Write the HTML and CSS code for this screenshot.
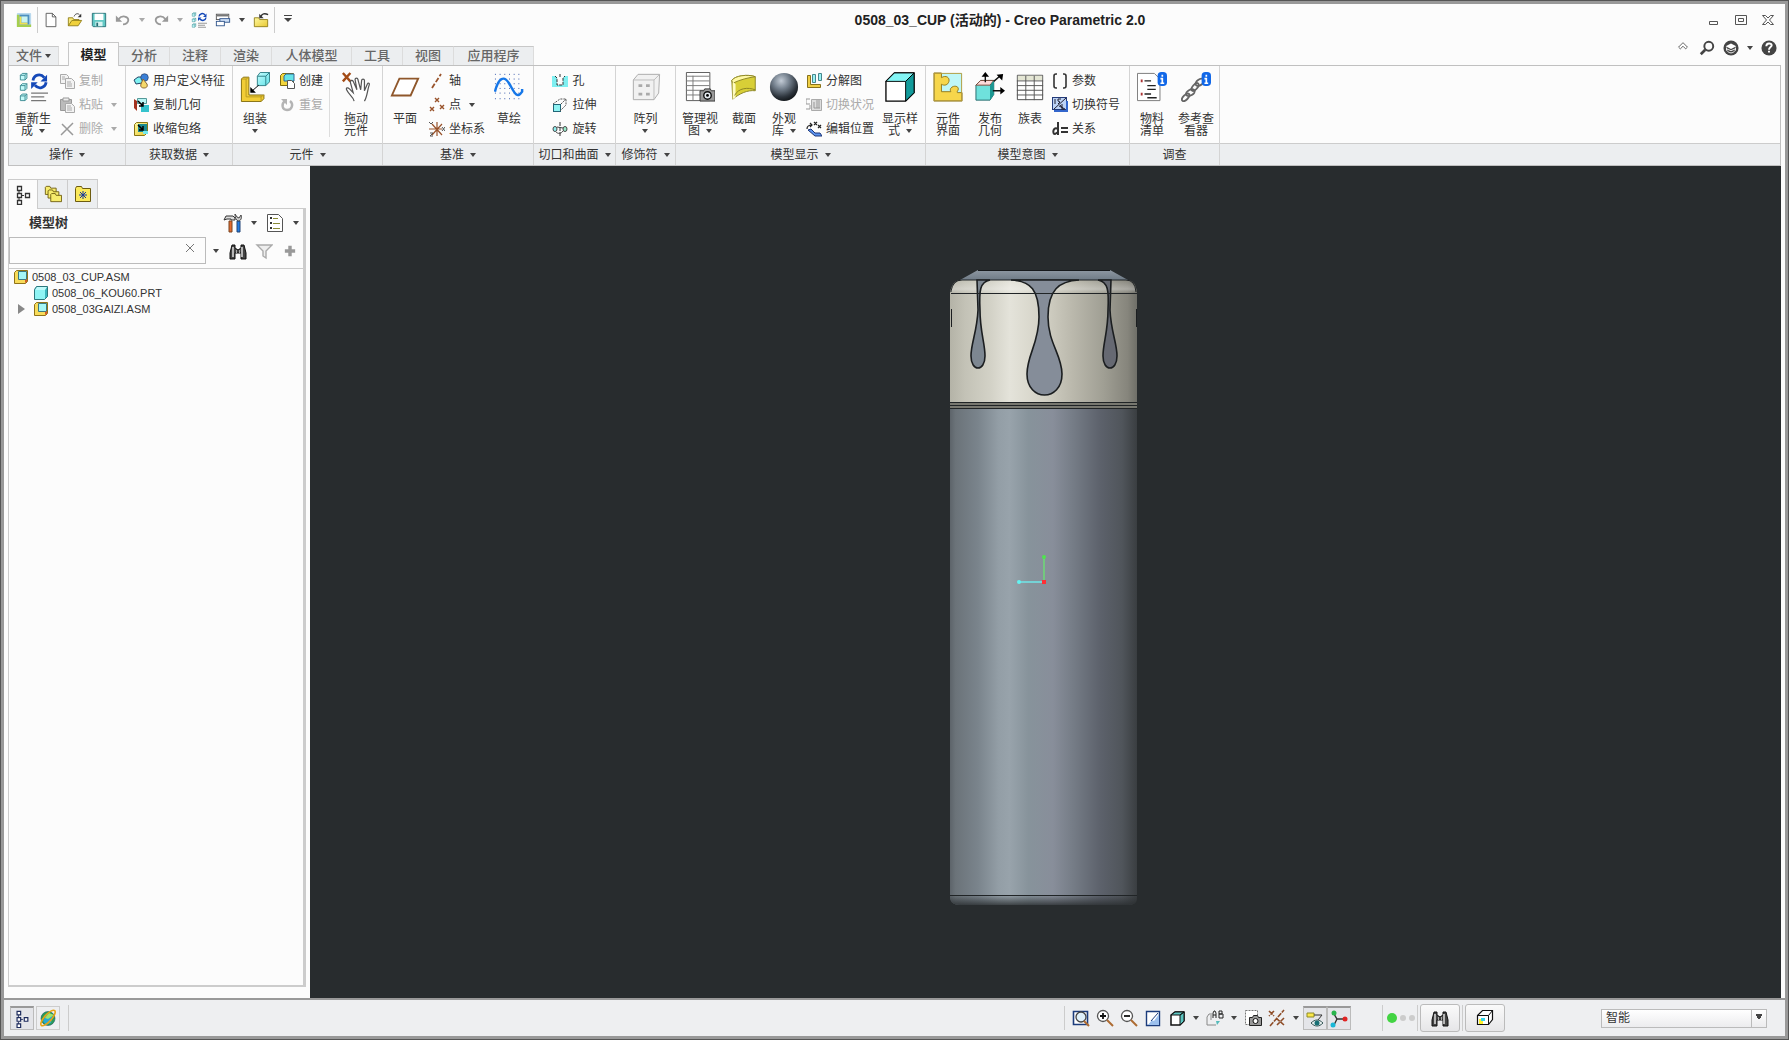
FILE: index.html
```html
<!DOCTYPE html>
<html lang="zh-CN">
<head>
<meta charset="utf-8">
<title>0508_03_CUP (活动的) - Creo Parametric 2.0</title>
<link rel="stylesheet" href="styles.css">
</head>
<body>
<svg class="sprite" aria-hidden="true">
  <defs>
    <linearGradient id="gold" x1="0" y1="0" x2="1" y2="1"><stop offset="0" stop-color="#fff9a0"/><stop offset="1" stop-color="#e8c832"/></linearGradient>
    <linearGradient id="aqua" x1="0" y1="0" x2="1" y2="1"><stop offset="0" stop-color="#c6ffff"/><stop offset="1" stop-color="#5fe0e6"/></linearGradient>
    <radialGradient id="ball" cx=".4" cy=".28" r=".72"><stop offset="0" stop-color="#c3ccd6"/><stop offset=".4" stop-color="#75818e"/><stop offset=".8" stop-color="#2d343c"/><stop offset="1" stop-color="#15191d"/></radialGradient>
  </defs>
  <symbol id="app" viewBox="0 0 18 18"><rect x="1" y="1" width="16" height="16" rx="1" fill="#b9d9ee"/><path d="M1 17V3h3v11h13v3z" fill="#a5cf4e"/><rect x="4" y="3" width="11" height="11" fill="#4c8fc0"/><rect x="6" y="5" width="7" height="7" fill="#c9f3ef"/><path d="M4 14V5h2v7h7v2z" fill="#f0e050"/></symbol>
  <symbol id="new" viewBox="0 0 18 18"><path d="M3.500 1.500h7l4 4v11h-11z" fill="#fff" stroke="#555"/><path d="M10.500 1.500v4h4" fill="none" stroke="#555"/></symbol>
  <symbol id="open" viewBox="0 0 18 18"><path d="M1.500 15.500v-9h5l1 2h6v2" fill="#f8e878" stroke="#8f7d18"/><path d="M1.500 15.500l4-6h11l-4 6z" fill="#f0d13c" stroke="#8f7d18"/><path d="M8 5c1-3 4-4 6-2" fill="none" stroke="#333"/><path d="M16 2v4h-4z" fill="#333"/></symbol>
  <symbol id="save" viewBox="0 0 18 18"><path d="M1.500 1.500h15v15h-14l-1-1z" fill="#63c9c5" stroke="#256d74"/><rect x="4" y="2" width="10" height="7" fill="#fff"/><path d="M5 11h8v5H5z" fill="#d8f4f2"/><path d="M6 12h2v4H6z" fill="#256d74"/></symbol>
  <symbol id="undo" viewBox="0 0 18 18"><path d="M4 8c4-5 11-3 11 1 0 3-3 5-6 5" fill="none" stroke="#999" stroke-width="2"/><path d="M1 4v7h7z" fill="#999"/></symbol>
  <symbol id="redo" viewBox="0 0 18 18"><path d="M14 8C10 3 3 5 3 9c0 3 3 5 6 5" fill="none" stroke="#999" stroke-width="2"/><path d="M17 4v7h-7z" fill="#999"/></symbol>
  <symbol id="regen" viewBox="0 0 32 32"><g fill="#c4fafa" stroke="#3d8c93"><path d="M2.500 3.500l2-2h5v5l-2 2h-5z"/><path d="M2.500 14.500l2-2h5v5l-2 2h-5z"/><path d="M2.500 25.500l2-2h5v5l-2 2h-5z"/><path d="M2.500 3.500h5v5m0-5l2-2M2.500 14.500h5v5m0-5l2-2M2.500 25.500h5v5m0-5l2-2" fill="none"/></g><path d="M16 9c1-6 8-8 12-3M30 11c-1 6-8 8-12 3" fill="none" stroke="#1549b8" stroke-width="3"/><path d="M31 3v7h-7zM14 18v-7h7z" fill="#1549b8"/><path d="M14 22.500h18M14 26.500h14M14 30.500h16" stroke="#777" stroke-width="1.500"/></symbol>
  <symbol id="windows" viewBox="0 0 18 18"><rect x="1.500" y="2.500" width="14" height="6" fill="#fff" stroke="#555"/><path d="M2 3h13v2H2z" fill="#777"/><rect x="5.500" y="7.500" width="11" height="4" fill="#cfe0f7" stroke="#2c5189"/><rect x="1.500" y="10.500" width="9" height="5" fill="#fff" stroke="#2c5189"/></symbol>
  <symbol id="closewin" viewBox="0 0 18 18"><path d="M1.500 16.500v-10h5l1 2h9v8z" fill="url(#gold)" stroke="#8f7d18"/><path d="M9 5c1-3 4-4 8-2" fill="none" stroke="#333" stroke-width="1.500"/><path d="M7 2v5h5z" fill="#333"/></symbol>
  <symbol id="copy" viewBox="0 0 16 16"><g fill="#f3f3f3" stroke="#aaa"><path d="M1.500 1.500h6l2 2v7h-8z"/><path d="M6.500 5.500h6l3 3v7h-9z"/><path d="M8 9h4M8 11h5M8 13h5M3 4h3M3 6h3"/></g></symbol>
  <symbol id="paste" viewBox="0 0 16 16"><path d="M1.500 2.500h11v11h-11z" fill="#bbb" stroke="#999"/><path d="M4 1h6v3H4z" fill="#eee" stroke="#999"/><path d="M6.500 6.500h6l3 3v6h-9z" fill="#f3f3f3" stroke="#aaa"/><path d="M8 9h4M8 11h5M8 13h5" stroke="#aaa"/></symbol>
  <symbol id="del" viewBox="0 0 16 16"><path d="M3 3l11 11M14 2L2 14" stroke="#999" stroke-width="1.500"/></symbol>
  <symbol id="udf" viewBox="0 0 16 16"><path d="M1 7l4-3h6l-2 6-6 1z" fill="#7ff2f2" stroke="#246"/><circle cx="11.500" cy="4.500" r="3.800" fill="#3a7fd6" stroke="#235" stroke-width=".6"/><path d="M10 6l4 5c1 3-1 4-3 4s-4-1-3-4z" fill="#f5d96b" stroke="#863"/></symbol>
  <symbol id="copygeom" viewBox="0 0 16 16"><path d="M1 2l3 2v10l-3-3z" fill="#a4321f"/><path d="M4.500 1.500h9v5h-9z" fill="#b8f6f6" stroke="#599"/><path d="M8 8h8v7H8z" fill="#35c3cd"/><path d="M5 4l5 5m0-4v4H6" stroke="#000" fill="none" stroke-width="1.500"/></symbol>
  <symbol id="shrink" viewBox="0 0 16 16"><path d="M1.500 3.500l2-2h11v10l-3 3h-10z" fill="url(#gold)" stroke="#877414"/><path d="M5 3h9v8H5z" fill="#1a8b90"/><path d="M5 4l5 5m0-4v4H6" stroke="#000" fill="none" stroke-width="1.500"/><path d="M10 10h5v3h-5z" fill="#73e8ee"/></symbol>
  <symbol id="assemble" viewBox="0 0 32 32"><path d="M1.500 31.500v-24l2-2h6v19h16v4l-3 3z" fill="#f2cd36" stroke="#806c0d"/><path d="M1.500 7.500h5v19h16v5M6.500 7.500l3-2M22 26.500l4-2" fill="none" stroke="#b79a20"/><path d="M18.500 4.500l3-4h10v10l-4 4h-9z" fill="url(#aqua)" stroke="#2d7d84"/><path d="M18.500 4.500h9v10m0-10l4-4" fill="none" stroke="#2d7d84"/><path d="M20 14l-8 7" stroke="#000"/><path d="M11 16v6h6z"/></symbol>
  <symbol id="create" viewBox="0 0 16 16"><path d="M1.500 12.500v-10l2-2h11v9l-3 3z" fill="#f3d63d" stroke="#806c0d"/><path d="M5 3l2-2h8v7H5z" fill="#65e4e8" stroke="#369"/><path d="M8.500 7.500h4l3 3v5h-7z" fill="#fff" stroke="#555"/></symbol>
  <symbol id="repeat" viewBox="0 0 16 16"><path d="M6 4c-4 3-3 9 2 9s7-6 3-9" fill="none" stroke="#b4b4b4" stroke-width="2.400"/><path d="M2 2h6v6z" fill="#b4b4b4"/></symbol>
  <symbol id="hand" viewBox="0 0 32 32"><path d="M2 1l8 9M10 1L2 10" stroke="#a34b16" stroke-width="2.500"/><path d="M14 31c-1-5-6-7-8-12-1-2 1-3 3-1l4 4-3-11c0-2 2-3 3-1l4 9-2-11c0-2 3-2 3 0l3 11 1-10c0-2 3-2 3 0v11l3-7c1-2 3-1 2 1-2 6-2 12-5 17" fill="#fff" stroke="#555" stroke-width="1.300"/></symbol>
  <symbol id="plane" viewBox="0 0 32 32"><path d="M10 7h20l-8 18H2z" fill="#fff" stroke="#8f572b" stroke-width="2"/></symbol>
  <symbol id="axis" viewBox="0 0 16 16"><path d="M3 15L12 1" stroke="#98522a" stroke-width="1.800" stroke-dasharray="5 2"/></symbol>
  <symbol id="point" viewBox="0 0 16 16"><path d="M6 1l4 4m0-4L6 5M1 10l4 4m0-4l-4 4M11 8l4 4m0-4l-4 4" stroke="#98522a" stroke-width="1.400"/></symbol>
  <symbol id="csys" viewBox="0 0 16 16"><path d="M0 8h13M8 1v14M3 3l10 11M13 3L3 14" stroke="#98522a" stroke-width="1.200"/><path d="M0 1l2 2 2-2M13 6l3 4m0-4l-3 4M1 12h3l-3 3h3" stroke="#555" fill="none"/></symbol>
  <symbol id="sketch" viewBox="0 0 32 32"><g stroke="#2c4fa8" stroke-dasharray="1 4"><path d="M1 2.500h30M1 7.500h30M1 12.500h30M1 17.500h30M1 22.500h30M1 28.500h30"/></g><path d="M1 21C5 5 11 4 16 12s8 18 14 9v-3" fill="none" stroke="#1677e8" stroke-width="2.600"/></symbol>
  <symbol id="hole" viewBox="0 0 16 16"><path d="M0 3h3l2 2v9H0zM16 3h-3l-2 2v9h5zM5 12h6v2H5z" fill="#7feff1"/><path d="M3 3l2 2v7h6V5l2-2M8 1v3" fill="none" stroke="#333" stroke-dasharray="3 1"/></symbol>
  <symbol id="extrude" viewBox="0 0 16 16"><rect x="1.500" y="7.500" width="7" height="7" fill="#8ff3f3" stroke="#267"/><path d="M1 7l7-5h6v6l-6 6M9 7l5-5" fill="none" stroke="#555" stroke-dasharray="2 1"/></symbol>
  <symbol id="revolve" viewBox="0 0 16 16"><path d="M8 1v15" stroke="#333" stroke-dasharray="4 1"/><ellipse cx="3" cy="8" rx="2" ry="2.500" fill="#8ff3f3" stroke="#444"/><ellipse cx="13" cy="8" rx="2" ry="2.500" fill="#9ec" stroke="#444"/><path d="M4 11c2 2 5 2 7-1M5 6l6 1" fill="none" stroke="#444"/></symbol>
  <symbol id="pattern" viewBox="0 0 32 32"><path d="M2.500 8.500l5-6h23l-1 20-5 7h-22z" fill="#f1f1f1" stroke="#aaa"/><path d="M2.500 8.500h22v21m0-21l6-6" fill="none" stroke="#bbb"/><g fill="#aaa"><path d="M8 13h4v3H8zM16 13h4v3h-4zM8 22h4v3H8zM16 22h4v3h-4z"/></g></symbol>
  <symbol id="manage" viewBox="0 0 32 32"><path d="M1.500.500h25v30h-25z" fill="#fff" stroke="#555"/><path d="M1 4.500h25M1 9.500h25M1 14.500h25M1 19.500h25M1 24.500h25M8.500 4v26" stroke="#777"/><path d="M16 20h4l1-2h6l1 2h4v11H16z" fill="#999" stroke="#333"/><circle cx="24" cy="25" r="4" fill="#e8eef2" stroke="#111" stroke-width="1.500"/><circle cx="24" cy="25" r="1.500"/></symbol>
  <symbol id="section" viewBox="0 0 32 32"><path d="M3 9c3-5 17-7 25-4v15c-8-1-17 3-24 9z" fill="#d8cf37" stroke="#8a8323"/><path d="M3 9c3-5 17-7 25-4-7 1-16 3-24 7z" fill="#fff9a4" stroke="#8a8323"/><path d="M4 10l3 3v14l-3 2z" fill="#fffbc0"/><path d="M6 25c4-8 14-9 22-6" fill="none" stroke="#8a8323"/></symbol>
  <symbol id="sphere" viewBox="0 0 32 32"><circle cx="16" cy="16" r="15" fill="url(#ball)"/></symbol>
  <symbol id="explode" viewBox="0 0 16 16"><path d="M1.500 2.500h3v9h10v3h-13z" fill="#f0cf45" stroke="#88721b"/><path d="M6.500 1.500h3v8h-3zM12.500.500h3v7h-3z" fill="#9cf2f4" stroke="#47868c"/></symbol>
  <symbol id="toggle" viewBox="0 0 16 16"><path d="M5.500 2.500h10v11h-10z" fill="#ddd" stroke="#aaa"/><path d="M8 5v6h6M0 2h4M0 2v5h4M0 12h4V8M11 3v8M13 3v8" fill="none" stroke="#999"/></symbol>
  <symbol id="editpos" viewBox="0 0 16 16"><path d="M2 9l3-1 4 4h5l2 3H9z" fill="#5b93f0" stroke="#1c3476"/><path d="M1 8c0-3 2-4 5-4m-2-2l2 2-2 2M8 1l3 3m0-3L8 4M12 4l3 3m0-3l-3 3" fill="none" stroke="#222" stroke-width="1.200"/></symbol>
  <symbol id="display" viewBox="0 0 32 32"><path d="M1 10L10 1h21v21l-9 9H1z" fill="#fff" stroke="#000" stroke-width="1.400"/><path d="M1 10L10 1h21l-9 9z" fill="#83f5f5" stroke="#000"/><path d="M22 10l9-9v21l-9 9z" fill="#129b9b" stroke="#000"/></symbol>
  <symbol id="puzzle" viewBox="0 0 32 32"><path d="M1 1h30v30H1z" fill="#bff7f7"/><path d="M1 1h8v5c5-3 9 0 8 4s-5 5-8 3v8h10c-3-6 8-8 8-3 0 2-2 3-1 4h5v9H1z" fill="#f6d64b" stroke="#917617"/><path d="M1.500 1.500h29v29h-29z" fill="none" stroke="#b39a3b"/></symbol>
  <symbol id="publish" viewBox="0 0 32 32"><path d="M1 14l5-5h14v15l-4 6H1z" fill="#6fe1dc" stroke="#28696b"/><path d="M1 14l5-5h14l-4 5z" fill="#ffdada" stroke="#743"/><path d="M16 14l4-5v15l-4 6z" fill="#1b9792"/><path d="M11 11V3M20 10l7-6M19 20h9" stroke="#111" stroke-width="1.500"/><path d="M11 0l4 5H7zM30 2l-1 7-6-6zM32 20l-5 4v-8z"/></symbol>
  <symbol id="table" viewBox="0 0 32 32"><path d="M2.500 3.500h27v26h-27z" fill="#fff" stroke="#444"/><path d="M3 4h26v5H3z" fill="#e4e6d4"/><path d="M2 9.500h28M2 14.500h28M2 19.500h28M2 24.500h28M11.500 4v26M20.500 4v26" stroke="#555"/></symbol>
  <symbol id="param" viewBox="0 0 16 16"><path d="M5 1H4Q2 1 2 3v10q0 2 2 2h1M11 1h1q2 0 2 2v10q0 2-2 2h-1" fill="none" stroke="#333" stroke-width="1.600"/></symbol>
  <symbol id="switchsym" viewBox="0 0 16 16"><rect x=".500" y=".500" width="14" height="12" fill="#bcd2f5" stroke="#233a78"/><path d="M3 2v5M9 2H6v2l2 1-2 2M14 1L2 12M8 8l5 6M7 9l6 3M10 7v7" fill="none" stroke="#223"/><path d="M2 14h14M15 4v11" stroke="#36c" stroke-width="2"/></symbol>
  <symbol id="relation" viewBox="0 0 16 16"><path d="M6 1v13M6 8c-5-3-6 5-3 5l3-2M9 7h7M9 11h7" fill="none" stroke="#333" stroke-width="2"/></symbol>
  <symbol id="bom" viewBox="0 0 32 32"><path d="M.500 1.500h18l6 6v23H.500z" fill="#fff" stroke="#777"/><path d="M8 9.500h7M11 14.500h9M11 18.500h9M8 23.500h7M11 27.500h10" stroke="#222" stroke-width="1.500"/><path d="M4 8h2v3H4zM4 22h2v3H4z" fill="#a33"/><rect x="22" y="0" width="10" height="15" rx="4" fill="#1268e8"/><path d="M27 3v2m-2 2h2v5m-2 0h4" stroke="#fff" stroke-width="1.800" fill="none"/></symbol>
  <symbol id="chain" viewBox="0 0 32 32"><g fill="none" stroke="#666" stroke-width="2"><ellipse cx="5" cy="27" rx="5" ry="2.500" transform="rotate(-45 5 27)"/><ellipse cx="10" cy="22" rx="5" ry="3" transform="rotate(-30 10 22)"/><ellipse cx="15" cy="16" rx="5" ry="2.500" transform="rotate(-50 15 16)"/><ellipse cx="20" cy="11" rx="5" ry="3" transform="rotate(-35 20 11)"/></g><rect x="22" y="0" width="10" height="15" rx="4" fill="#1268e8"/><path d="M27 3v2m-2 2h2v5m-2 0h4" stroke="#fff" stroke-width="1.800" fill="none"/></symbol>
  <symbol id="tree" viewBox="0 0 18 20"><path d="M5 5v3m0 5v3M7 10.500h3" stroke="currentColor"/><path d="M3.500 1.500h4v4h-4zM3.500 8.500h4v4h-4zM3.500 15.500h4v4h-4zM11.500 8.500h4v4h-4z" fill="#fff" stroke="currentColor" stroke-width="1.300"/></symbol>
  <symbol id="folders" viewBox="0 0 20 20"><g fill="#f7ec6c" stroke="#6d5c10"><path d="M1.500 10.500v-8l1-1h4l1 2h6v7z"/><path d="M4.500 14.500v-8l1-1h4l1 2h6v7z"/><path d="M7.500 18.500v-8l1-1h4l1 2h6v7z"/></g></symbol>
  <symbol id="fav" viewBox="0 0 18 18"><path d="M1.500 16.500v-13l1-2h5l1 2h8v13z" fill="#fae95b" stroke="#6d5c10"/><path d="M9 6v8M5 10h8M6 7l6 6M12 7l-6 6" stroke="#16389c"/></symbol>
  <symbol id="tools" viewBox="0 0 20 20"><path d="M1 7l2-4h7l2 2v2H8V6H4z" fill="#ddd" stroke="#333"/><path d="M6 8h3v11H6z" fill="#e66a2c" stroke="#742"/><path d="M14 8h3v11h-3z" fill="#237be0" stroke="#247"/><path d="M12 1c0 4 1 6 3 7 3 0 4-3 3-6l-2 3-2-1z" fill="#ccc" stroke="#444"/></symbol>
  <symbol id="list" viewBox="0 0 20 20"><path d="M2.500 1.500h11l4 4v13h-15z" fill="#fff" stroke="#555"/><path d="M8 5.500h5M8 10.500h7M8 15.500h7" stroke="#898b35"/><path d="M5 5h2M5 10h2M5 15h2" stroke="#333" stroke-width="2"/></symbol>
  <symbol id="binoc" viewBox="0 0 18 18"><path d="M3 3h3v3l3 2 3-2V3h3l2 8v6h-5v-6H6v6H1v-6z" fill="#444" stroke="#111"/><path d="M4 5v10M13 5v10" stroke="#ddd" stroke-width="1.500"/><path d="M7.500 8v3M10.500 8v3" stroke="#aaa"/></symbol>
  <symbol id="funnel" viewBox="0 0 18 18"><path d="M2 3h15l-6 6v7l-3-2V9z" fill="#eee" stroke="#aaa" stroke-width="1.400"/></symbol>
  <symbol id="plus" viewBox="0 0 14 14"><path d="M7 1v12M1 7h12" stroke="#999" stroke-width="4"/></symbol>
  <symbol id="asm" viewBox="0 0 14 14"><path d="M.500 13.500v-11l2-2h11v11l-2 2z" fill="#f8dc5a" stroke="#907318"/><path d="M4.500 1.500h8v8h-8z" fill="#a4f6f5" stroke="#3b7980"/><path d="M11 10l2-1v3l-2 1z" fill="#d45f28"/></symbol>
  <symbol id="prt" viewBox="0 0 14 14"><path d="M.500 3.500l2-3h11v10l-3 3h-10z" fill="#38b6bd" stroke="#2c777c"/><path d="M1 4h10v9H1z" fill="#8ef4f4"/><path d="M3 1h10l-2 3H1z" fill="#c0fafa"/></symbol>
  <symbol id="globe" viewBox="0 0 18 18"><circle cx="9" cy="9.500" r="7" fill="#2a9d58" stroke="#256" stroke-width=".6"/><path d="M4 12l4-8 6 2-2 8-5 2z" fill="#27a8d5"/><path d="M6 9l4-5 5 2-6 4z" fill="#9fe46a"/><ellipse cx="9" cy="9" rx="10" ry="3.500" transform="rotate(-48 9 9)" fill="none" stroke="#e9a313" stroke-width="1.600"/></symbol>
  <symbol id="refit" viewBox="0 0 18 18"><path d="M1.500 2.500h14v13h-14z" fill="#fff" stroke="#1c3c7c" stroke-width="1.600"/><circle cx="9" cy="8" r="5" fill="#dff0fa" stroke="#444" stroke-width="1.300"/><path d="M12 12l5 5" stroke="#ad6b32" stroke-width="2"/></symbol>
  <symbol id="zoomin" viewBox="0 0 18 18"><circle cx="7" cy="7" r="5.500" fill="#fff" stroke="#555" stroke-width="1.300"/><path d="M4 7h6M7 4v6" stroke="#111" stroke-width="1.800"/><path d="M11 11l6 6" stroke="#ad6b32" stroke-width="2"/></symbol>
  <symbol id="zoomout" viewBox="0 0 18 18"><circle cx="7" cy="7" r="5.500" fill="#fff" stroke="#555" stroke-width="1.300"/><path d="M4 7h6" stroke="#111" stroke-width="1.800"/><path d="M11 11l6 6" stroke="#ad6b32" stroke-width="2"/></symbol>
  <symbol id="repaint" viewBox="0 0 18 18"><path d="M2.500 2.500h13v14h-13z" fill="#fff" stroke="#1c3c7c" stroke-width="1.400"/><path d="M4 16l4-5 2 1 5-7v11z" fill="#9cc0ee"/><path d="M7 12l7-8" stroke="#1c3c7c"/></symbol>
  <symbol id="cubeview" viewBox="0 0 18 18"><path d="M3 6l4-3h9v9l-4 4H3z" fill="#fff" stroke="#111" stroke-width="1.500"/><path d="M3 6l4-3h9l-4 3zM12 6l4-3v9l-4 4z" fill="#5cc4c0" stroke="#111"/></symbol>
  <symbol id="named" viewBox="0 0 18 18"><path d="M6 5H3L1 8v8h9M5 6v5" fill="none" stroke="#888"/><path d="M10 12h4l-3 4z" fill="#5bb"/><path d="M7 9V4l1-2h1l1 2v5M7 6h3M13 9V2h3v3h-3 4v4h-4" fill="none" stroke="#222"/></symbol>
  <symbol id="camera" viewBox="0 0 18 18"><path d="M1.500 1.500h12v14h-12z" fill="#fff" stroke="#777" stroke-dasharray="2 1"/><path d="M5.500 8.500h3l1-2h4l1 2h3v8h-12z" fill="#999" stroke="#222"/><circle cx="11.500" cy="12" r="2.500" fill="#fff" stroke="#111"/></symbol>
  <symbol id="datum" viewBox="0 0 18 18"><path d="M1 2l5 5m0-5L1 7M2 17L16 1M8 9l8 7m0-7l-7 7" stroke="#8e4d28" stroke-width="1.600" stroke-dasharray="5 1"/></symbol>
  <symbol id="annot" viewBox="0 0 18 18"><path d="M1 3h7v4H1z" fill="#fae84b" stroke="#8e8a28"/><path d="M8 5h8l-4 5" fill="none" stroke="#333"/><path d="M5 13c4-4 8-4 12 0-4 4-8 4-12 0z" fill="#e7eeee" stroke="#355"/><circle cx="11" cy="13" r="2.500" fill="#176f74"/></symbol>
  <symbol id="spin" viewBox="0 0 18 18"><path d="M4 4l3 5h8M7 9l-3 6" stroke="#333" fill="none" stroke-width="1.400"/><circle cx="4" cy="3" r="2.500" fill="#28b54c"/><circle cx="15" cy="9" r="2.500" fill="#e02424"/><circle cx="3" cy="15" r="2.500" fill="#19b7d7"/></symbol>
  <symbol id="selbox" viewBox="0 0 18 18"><path d="M1.500 6.500l5-5h10v9l-4 5h-11z" fill="#fff" stroke="#111" stroke-width="1.200"/><path d="M1.500 6.500h11v9m0-9l4-5" fill="none" stroke="#111"/><path d="M3 10h4v5H3z" fill="#fff12d"/><path d="M5 9h4v3H5z" fill="#35d5ee"/></symbol>
  <symbol id="search" viewBox="0 0 18 18"><circle cx="11" cy="7" r="5" fill="none" stroke="#444" stroke-width="2.200"/><path d="M7 11l-5 5" stroke="#444" stroke-width="3"/></symbol>
  <symbol id="learn" viewBox="0 0 18 18"><circle cx="9" cy="9" r="8.500" fill="#444"/><path d="M3 7l6-3 6 3-6 3z" fill="#fff"/><path d="M4 8.500v3c3 4 7 4 10 0v-3M4 10l5 2 5-2" fill="none" stroke="#fff"/></symbol>
  <symbol id="help" viewBox="0 0 18 18"><circle cx="9" cy="9" r="8.500" fill="#444"/><path d="M6 7c0-4 6-4 6-1 0 2-3 2-3 5M9 12v2" fill="none" stroke="#fff" stroke-width="2.200"/></symbol>
</svg>

<div class="window">
  <header class="titlebar">
    <div class="quick">
      <button class="qa" aria-label="应用程序"><svg><use href="#app"/></svg></button>
      <span class="rule"></span>
      <button class="qa" aria-label="新建"><svg><use href="#new"/></svg></button>
      <button class="qa" aria-label="打开"><svg><use href="#open"/></svg></button>
      <button class="qa" aria-label="保存"><svg><use href="#save"/></svg></button>
      <button class="qa" aria-label="撤消"><svg><use href="#undo"/></svg></button>
      <button class="drop faded" aria-label="撤消列表"></button>
      <button class="qa" aria-label="重做"><svg><use href="#redo"/></svg></button>
      <button class="drop faded" aria-label="重做列表"></button>
      <button class="qa" aria-label="重新生成"><svg><use href="#regen"/></svg></button>
      <button class="qa" aria-label="窗口"><svg><use href="#windows"/></svg></button>
      <button class="drop" aria-label="窗口列表"></button>
      <button class="qa" aria-label="关闭窗口"><svg><use href="#closewin"/></svg></button>
      <span class="rule"></span>
      <button class="drop wide" aria-label="自定义快速访问"></button>
    </div>
    <h1>0508_03_CUP (活动的) - Creo Parametric 2.0</h1>
    <div class="controls">
      <button aria-label="最小化"><svg viewBox="0 0 12 12"><path d="M1.500 7.500h8v3h-8z" fill="none" stroke="#555"/></svg></button>
      <button aria-label="最大化"><svg viewBox="0 0 12 12"><path d="M.500 1.500h11v9H.500zM3.500 4.500h5v3h-5z" fill="none" stroke="#555"/></svg></button>
      <button aria-label="关闭"><svg viewBox="0 0 12 12"><path d="M.500 1.500h3L6 4l2.500-2.500h3L7.500 6l4 4.500h-3L6 8l-2.500 2.500h-3L4.500 6z" fill="none" stroke="#555"/></svg></button>
    </div>
  </header>

  <nav class="tabs">
    <button class="tab file">文件<i class="caret"></i></button>
    <button class="tab active">模型</button>
    <button class="tab">分析</button>
    <button class="tab">注释</button>
    <button class="tab">渲染</button>
    <button class="tab long">人体模型</button>
    <button class="tab">工具</button>
    <button class="tab">视图</button>
    <button class="tab long">应用程序</button>
    <div class="utilities">
      <button class="util" aria-label="最小化功能区"><svg viewBox="0 0 18 18"><path d="M4 8l5-5 5 5-2 2-3-3-3 3z" fill="#fff" stroke="#555"/></svg></button>
      <button class="util" aria-label="搜索"><svg><use href="#search"/></svg></button>
      <button class="util" aria-label="学习"><svg><use href="#learn"/></svg></button>
      <button class="drop" aria-label="学习列表"></button>
      <button class="util" aria-label="帮助"><svg><use href="#help"/></svg></button>
    </div>
  </nav>

  <section class="ribbon">
    <div class="group">
      <div class="tools lead">
        <button class="big wide"><svg><use href="#regen"/></svg><span>重新生<br>成<i class="caret"></i></span></button>
        <div class="stack">
          <button class="small" disabled><svg><use href="#copy"/></svg>复制</button>
          <button class="small" disabled><svg><use href="#paste"/></svg>粘贴<i class="caret"></i></button>
          <button class="small" disabled><svg><use href="#del"/></svg>删除<i class="caret"></i></button>
        </div>
      </div>
      <button class="caption">操作<i class="caret"></i></button>
    </div>
    <div class="group">
      <div class="tools">
        <div class="stack">
          <button class="small"><svg><use href="#udf"/></svg>用户定义特征</button>
          <button class="small"><svg><use href="#copygeom"/></svg>复制几何</button>
          <button class="small"><svg><use href="#shrink"/></svg>收缩包络</button>
        </div>
      </div>
      <button class="caption">获取数据<i class="caret"></i></button>
    </div>
    <div class="group">
      <div class="tools lead">
        <button class="big"><svg><use href="#assemble"/></svg><span>组装<br><i class="caret solo"></i></span></button>
        <div class="stack">
          <button class="small"><svg><use href="#create"/></svg>创建</button>
          <button class="small" disabled><svg><use href="#repeat"/></svg>重复</button>
        </div>
        <span class="divider"></span>
        <button class="big"><svg><use href="#hand"/></svg><span>拖动<br>元件</span></button>
      </div>
      <button class="caption">元件<i class="caret"></i></button>
    </div>
    <div class="group">
      <div class="tools lead">
        <button class="big"><svg><use href="#plane"/></svg><span>平面</span></button>
        <div class="stack">
          <button class="small"><svg><use href="#axis"/></svg>轴</button>
          <button class="small"><svg><use href="#point"/></svg>点<i class="caret"></i></button>
          <button class="small"><svg><use href="#csys"/></svg>坐标系</button>
        </div>
        <button class="big"><svg><use href="#sketch"/></svg><span>草绘</span></button>
      </div>
      <button class="caption">基准<i class="caret"></i></button>
    </div>
    <div class="group">
      <div class="tools">
        <div class="stack">
          <button class="small"><svg><use href="#hole"/></svg>孔</button>
          <button class="small"><svg><use href="#extrude"/></svg>拉伸</button>
          <button class="small"><svg><use href="#revolve"/></svg>旋转</button>
        </div>
      </div>
      <button class="caption">切口和曲面<i class="caret"></i></button>
    </div>
    <div class="group">
      <div class="tools">
        <button class="big"><svg><use href="#pattern"/></svg><span>阵列<br><i class="caret solo"></i></span></button>
      </div>
      <button class="caption">修饰符<i class="caret"></i></button>
    </div>
    <div class="group">
      <div class="tools lead">
        <button class="big wide"><svg><use href="#manage"/></svg><span>管理视<br>图<i class="caret"></i></span></button>
        <button class="big slim"><svg><use href="#section"/></svg><span>截面<br><i class="caret solo"></i></span></button>
        <button class="big slim"><svg><use href="#sphere"/></svg><span>外观<br>库<i class="caret"></i></span></button>
        <div class="stack">
          <button class="small"><svg><use href="#explode"/></svg>分解图</button>
          <button class="small" disabled><svg><use href="#toggle"/></svg>切换状况</button>
          <button class="small"><svg><use href="#editpos"/></svg>编辑位置</button>
        </div>
        <button class="big wide"><svg><use href="#display"/></svg><span>显示样<br>式<i class="caret"></i></span></button>
      </div>
      <button class="caption">模型显示<i class="caret"></i></button>
    </div>
    <div class="group">
      <div class="tools lead">
        <button class="big"><svg><use href="#puzzle"/></svg><span>元件<br>界面</span></button>
        <button class="big slim"><svg><use href="#publish"/></svg><span>发布<br>几何</span></button>
        <button class="big slim"><svg><use href="#table"/></svg><span>族表</span></button>
        <div class="stack">
          <button class="small"><svg><use href="#param"/></svg>参数</button>
          <button class="small"><svg><use href="#switchsym"/></svg>切换符号</button>
          <button class="small"><svg><use href="#relation"/></svg>关系</button>
        </div>
      </div>
      <button class="caption">模型意图<i class="caret"></i></button>
    </div>
    <div class="group">
      <div class="tools lead">
        <button class="big"><svg><use href="#bom"/></svg><span>物料<br>清单</span></button>
        <button class="big"><svg><use href="#chain"/></svg><span>参考查<br>看器</span></button>
      </div>
      <div class="caption">调查</div>
    </div>
    <div class="group rest">
      <div class="tools"></div>
      <div class="caption"></div>
    </div>
  </section>

  <main class="workspace">
    <aside class="sidebar">
      <div class="side-tabs">
        <button class="side-tab current" aria-label="模型树"><svg><use href="#tree"/></svg></button>
        <button class="side-tab" aria-label="文件夹浏览器"><svg><use href="#folders"/></svg></button>
        <button class="side-tab" aria-label="收藏夹"><svg><use href="#fav"/></svg></button>
      </div>
      <div class="panel">
        <div class="panel-head">
          <h2>模型树</h2>
          <button class="tool-icon" aria-label="设置"><svg><use href="#tools"/></svg></button>
          <button class="drop" aria-label="设置列表"></button>
          <button class="tool-icon" aria-label="显示"><svg><use href="#list"/></svg></button>
          <button class="drop" aria-label="显示列表"></button>
        </div>
        <div class="search-row">
          <div class="search-box">
            <input type="text" aria-label="搜索模型树">
            <button aria-label="清除"><svg viewBox="0 0 10 10"><path d="M1 1l8 8M9 1L1 9" stroke="#777"/></svg></button>
          </div>
          <button class="drop" aria-label="搜索选项"></button>
          <button class="find" aria-label="查找"><svg><use href="#binoc"/></svg></button>
          <button class="find" aria-label="过滤"><svg><use href="#funnel"/></svg></button>
          <button class="find" aria-label="添加"><svg class="tiny"><use href="#plus"/></svg></button>
        </div>
        <ul class="model-tree">
          <li><svg><use href="#asm"/></svg>0508_03_CUP.ASM</li>
          <li class="child"><i class="twist"></i><svg><use href="#prt"/></svg>0508_06_KOU60.PRT</li>
          <li class="child"><i class="twist shown"></i><svg><use href="#asm"/></svg>0508_03GAIZI.ASM</li>
        </ul>
      </div>
    </aside>
    <div class="viewport">
      <svg viewBox="310 166 1471 832" role="img" aria-label="保温杯模型">
        <defs>
          <linearGradient id="steel">
            <stop offset="0" stop-color="#5d646a"/><stop offset=".03" stop-color="#6b7379"/><stop offset=".15" stop-color="#7a848c"/><stop offset=".26" stop-color="#939ea6"/><stop offset=".32" stop-color="#98a3ab"/><stop offset=".42" stop-color="#87939b"/><stop offset=".55" stop-color="#888e9a"/><stop offset=".66" stop-color="#757c86"/><stop offset=".8" stop-color="#5d626c"/><stop offset=".92" stop-color="#50555b"/><stop offset="1" stop-color="#3a3e41"/>
          </linearGradient>
          <linearGradient id="cream">
            <stop offset="0" stop-color="#b4b3a7"/><stop offset=".08" stop-color="#c3c2b6"/><stop offset=".22" stop-color="#d3d2c7"/><stop offset=".32" stop-color="#e4e3da"/><stop offset=".5" stop-color="#d3d1c5"/><stop offset=".65" stop-color="#bbb9ad"/><stop offset=".82" stop-color="#a09f94"/><stop offset=".95" stop-color="#86857c"/><stop offset="1" stop-color="#6f6f68"/>
          </linearGradient>
          <linearGradient id="base" x2="0" y2="1"><stop offset="0" stop-color="#282c2e" stop-opacity="0"/><stop offset="1" stop-color="#282c2e" stop-opacity=".8"/></linearGradient>
          <linearGradient id="lip" x2="0" y2="1"><stop offset="0" stop-color="#8e98a2"/><stop offset="1" stop-color="#6f7b86"/></linearGradient>
          <linearGradient id="gloss" x2="0" y2="1"><stop offset="0" stop-color="#fff" stop-opacity="0"/><stop offset=".7" stop-color="#fff" stop-opacity=".3"/><stop offset="1" stop-color="#fff" stop-opacity="0"/></linearGradient>
        </defs>
        <path d="M978 270h132l18 10H960z" fill="url(#lip)"/>
        <path d="M978 270.500h132" stroke="#16191b"/>
        <path d="M950 293q2-13 12-13h164q10 0 11 13v110H950z" fill="url(#cream)"/>
        <path d="M951 293q2-13 11-13h164q9 0 10 13z" fill="url(#gloss)"/>
        <path d="M950 402h187v7H950z" fill="#77776f"/>
        <path d="M950 408h187v487H950z" fill="url(#steel)"/>
        <path d="M950 895h187v4q-1 6-9 6H960q-8 0-10-6z" fill="url(#steel)"/>
        <path d="M950 895h187v4q-1 6-9 6H960q-8 0-10-6z" fill="url(#base)"/>
        <path d="M951 292v-1q2-11 11-11h164q9 0 10 12" fill="none" stroke="#202426"/>
        <g stroke="#1b1e20" stroke-width="1.600">
          <path d="M1011 280c20 1 28 10 28 37 0 26-12 38-12 57 0 28 35 28 35 0 0-19-14-31-14-57 0-27 11-36 31-37z" fill="#858d99"/>
          <path d="M977 280l1 30c-1 22-7 33-7 46 0 16 14 16 14 0 0-13-5-24-5-46-1-20 0-28 10-30z" fill="#7d8791"/>
          <path d="M1111 280l-1 30c1 22 7 33 7 46 0 16-14 16-14 0 0-13 5-24 5-46 1-20 0-28-10-30z" fill="#666972"/>
        </g>
        <path d="M951 293.500h186M950 402.500h187M950 405.500h187M950 408.500h187M950 895.500h187" stroke="#202426"/>
        <path d="M951.500 309v18M1136.500 309v18" stroke="#1b1e20"/>
        <path d="M1019 582h25" stroke="#72e3e5" stroke-width="1.600"/>
        <path d="M1044 557v25" stroke="#6fd678" stroke-width="1.600"/>
        <circle cx="1019" cy="582" r="2" fill="#62f4f2"/><circle cx="1044" cy="557" r="2" fill="#4fe34f"/>
        <path d="M1042 580h4v4h-4z" fill="#ff2f35"/>
      </svg>
    </div>
  </main>

  <footer class="statusbar">
    <button class="toggle on" aria-label="导航器"><svg><use href="#tree"/></svg></button>
    <button class="toggle boxed" aria-label="浏览器"><svg><use href="#globe"/></svg></button>
    <span class="rule"></span>
    <div class="view-tools">
      <button class="qa" aria-label="重新调整"><svg><use href="#refit"/></svg></button>
      <button class="qa" aria-label="放大"><svg><use href="#zoomin"/></svg></button>
      <button class="qa" aria-label="缩小"><svg><use href="#zoomout"/></svg></button>
      <button class="qa" aria-label="重画"><svg><use href="#repaint"/></svg></button>
      <button class="qa" aria-label="显示样式"><svg><use href="#cubeview"/></svg></button>
      <button class="drop" aria-label="显示样式列表"></button>
      <button class="qa" aria-label="已命名视图"><svg><use href="#named"/></svg></button>
      <button class="drop" aria-label="视图列表"></button>
      <button class="qa" aria-label="视图管理器"><svg><use href="#camera"/></svg></button>
      <button class="qa" aria-label="基准显示"><svg><use href="#datum"/></svg></button>
      <button class="drop" aria-label="基准列表"></button>
      <button class="toggle on" aria-label="注释显示"><svg><use href="#annot"/></svg></button>
      <button class="toggle on" aria-label="旋转中心"><svg><use href="#spin"/></svg></button>
    </div>
    <div class="state">
      <span class="rule"></span>
      <span class="lights"><i class="lamp lit"></i><i class="lamp"></i><i class="lamp"></i></span>
      <span class="rule"></span>
      <button class="raised" aria-label="查找"><svg><use href="#binoc"/></svg></button>
      <span class="rule"></span>
      <button class="raised" aria-label="选择缓冲区"><svg><use href="#selbox"/></svg></button>
    </div>
    <div class="filter">
      <select aria-label="选择过滤器"><option>智能</option></select>
    </div>
  </footer>
</div>
</body>
</html>
```
FILE: styles.css
```css
* { box-sizing: border-box; }

body {
  margin: 0;
  font: 12px/16px "Liberation Sans", "Noto Sans CJK SC", sans-serif;
  color: #333;
}

button {
  display: flex;
  align-items: center;
  justify-content: center;
  margin: 0;
  padding: 0;
  border: 0;
  background: none;
  color: inherit;
  font: inherit;
  white-space: nowrap;
}

svg { display: block; flex: none; }
.sprite { position: absolute; width: 0; height: 0; }

.window {
  display: flex;
  flex-direction: column;
  min-height: 100vh;
  border: 1px solid #555;
  box-shadow: inset 0 0 0 3px #999;
  padding: 3px;
  background: #fcfcfc;
}

/* Shared pieces */
.caret, .drop::before {
  display: inline-block;
  content: "";
  border: 3px solid transparent;
  border-top: 4px solid #444;
  border-bottom: 0;
}
.drop { width: 14px; height: 20px; }
.drop.faded::before { border-top-color: #aaa; }
.drop.wide { width: 24px; }
.drop.wide::before { box-shadow: 0 -2px #fcfcfc, 0 -3px #444; border-width: 4px; border-bottom: 0; }
.qa { width: 24px; height: 24px; }
.qa svg { width: 16px; height: 16px; }
.rule { width: 1px; height: 26px; margin: 0 1px; background: #ccc; }

/* Title bar */
.titlebar {
  display: flex;
  align-items: center;
  height: 32px;
  padding: 0 4px 0 8px;
}
.quick, .controls { display: flex; align-items: center; }
.titlebar h1 {
  flex: 1;
  margin: 0;
  font-size: 14px;
  text-align: center;
  color: #222;
}
.controls button { width: 27px; height: 20px; }
.controls svg { width: 12px; height: 12px; }

/* Ribbon tabs */
.tabs {
  display: flex;
  align-items: flex-end;
  height: 29px;
  padding: 0 4px;
}
.tab {
  width: 51px;
  height: 19px;
  border-top: 1px solid #c8c8c8;
  border-right: 1px solid #dcdcdc;
  background: #eceef0;
  font-size: 13px;
  font-weight: 500;
  color: #666;
}
.tab.long { width: 80px; }
.tab.file { border-left: 1px solid #c8c8c8; margin-right: 9px; gap: 3px; }
.tab.active {
  position: relative;
  height: 24px;
  margin-bottom: -1px;
  border: 1px solid #c8c8c8;
  border-bottom: 0;
  background: #fcfcfc;
  font-weight: 700;
  color: #222;
}
.utilities {
  display: flex;
  align-items: center;
  align-self: flex-start;
  margin-left: auto;
}
.util { width: 24px; height: 24px; }
.util svg { width: 16px; height: 16px; }

/* Ribbon */
.ribbon {
  display: grid;
  grid-template-columns: 117px 107px 150px 151px 82px 60px 250px 204px 90px 1fr;
  margin: 0 4px;
  border: 1px solid #c0c0c0;
}
.group {
  display: flex;
  flex-direction: column;
  border-right: 1px solid #d4d4d4;
}
.group.rest { border-right: 0; }
.tools {
  display: flex;
  flex: 1;
  justify-content: center;
  min-height: 77px;
  padding: 3px 0 2px;
}
.tools.lead { justify-content: flex-start; }
.caption {
  display: flex;
  align-items: center;
  justify-content: center;
  gap: 6px;
  height: 22px;
  border-top: 1px solid #ccc;
  background: #eceef0;
}
.big {
  flex-direction: column;
  justify-content: flex-start;
  gap: 11px;
  width: 44px;
  padding-top: 3px;
  line-height: 12px;
}
.big.slim { width: 40px; }
.big.wide { width: 48px; }
.big svg { width: 30px; height: 30px; }
.big .caret { margin-left: 6px; vertical-align: 2px; }
.big .caret.solo { margin-left: 0; }
.stack { display: flex; flex-direction: column; margin: 0 2px; }
.small { justify-content: flex-start; gap: 4px; height: 24px; }
.small svg { width: 16px; height: 16px; }
.small .caret { margin-left: 4px; }
.small:disabled { color: #aaa; }
.small:disabled .caret { border-top-color: #aaa; }
.divider { width: 1px; margin: 4px 4px; background: #ddd; }

/* Workspace */
.workspace { display: flex; flex: 1; }
.sidebar {
  display: flex;
  flex-direction: column;
  width: 306px;
  padding: 13px 4px 11px;
}
.side-tabs { display: flex; }
.side-tab {
  width: 30px;
  height: 29px;
  border: 1px solid #ccc;
  border-left: 0;
  border-bottom: 0;
  background: #eceef0;
}
.side-tab.current {
  position: relative;
  height: 30px;
  margin-bottom: -1px;
  border-left: 1px solid #ccc;
  background: #fcfcfc;
}
.side-tab svg { width: 18px; height: 20px; }
.panel {
  flex: 1;
  border: 1px solid #ccc;
  border-right-width: 3px;
  border-bottom-width: 2px;
}
.panel-head { display: flex; align-items: center; height: 28px; }
.panel-head h2 {
  flex: 1;
  margin: 0;
  padding-left: 20px;
  font-size: 13px;
}
.tool-icon { width: 28px; height: 24px; }
.tool-icon svg { width: 20px; height: 20px; }
.search-row { display: flex; align-items: center; }
.search-box {
  display: flex;
  flex: 1;
  height: 27px;
  border: 1px solid #bbb;
}
.search-box input {
  flex: 1;
  min-width: 0;
  border: 0;
  background: transparent;
  font: inherit;
}
.search-box button { width: 30px; height: 20px; }
.search-box svg { width: 10px; height: 10px; }
.search-row .drop { width: 19px; }
.find { width: 26px; height: 24px; }
.find svg { width: 18px; height: 18px; }
.find svg.tiny { width: 12px; height: 12px; }
.model-tree {
  margin: 4px 0 0;
  padding: 0 0 0 5px;
  border-top: 1px solid #ccc;
  list-style: none;
  font-size: 11px;
}
.model-tree li { display: flex; align-items: center; gap: 4px; height: 16px; }
.model-tree svg { width: 14px; height: 14px; }
.child { padding-left: 4px; }
.twist { width: 12px; }
.twist.shown::before {
  display: block;
  width: 0;
  content: "";
  border: 5px solid transparent;
  border-left: 7px solid #888;
  border-right: 0;
}
.viewport { flex: 1; margin-right: 4px; background: #282c2e; }
.viewport svg { width: 100%; height: 100%; }

/* Status bar */
.statusbar {
  display: flex;
  align-items: center;
  height: 38px;
  padding: 0 18px 0 6px;
  border-top: 2px solid #999;
  background: #eeeff1;
}
.statusbar .rule { margin: 0 2px; }
.toggle { width: 24px; height: 24px; }
.toggle svg { width: 18px; height: 18px; color: #1c2a5c; }
.toggle.on { border: 1px solid #bbb; border-top: 2px solid #999; background: #e4e5e9; }
.toggle.boxed { margin: 0 6px 0 2px; border: 1px solid #ccc; }
.view-tools {
  display: flex;
  align-items: center;
  margin-left: auto;
  padding-left: 4px;
  border-left: 1px solid #ccc;
}
.view-tools .qa svg { width: 18px; height: 18px; }
.state { display: flex; align-items: center; margin-left: 29px; }
.lights { display: flex; align-items: center; gap: 3px; width: 30px; padding-left: 2px; }
.lamp { width: 6px; height: 6px; border-radius: 50%; background: #ccc; }
.lamp.lit { width: 10px; height: 10px; background: #43d443; }
.raised {
  width: 40px;
  height: 28px;
  border: 1px solid #bbb;
  border-radius: 3px;
  background: linear-gradient(#fafafa, #e6e6e8);
}
.raised svg { width: 18px; height: 18px; }
.filter { position: relative; width: 166px; margin-left: 96px; }
.filter select {
  width: 100%;
  height: 19px;
  padding: 0 18px 0 4px;
  border: 1px solid #bbb;
  border-radius: 0;
  background: linear-gradient(#fff, #ececee);
  appearance: none;
  color: #333;
  font: inherit;
}
.filter::after {
  position: absolute;
  top: 1px;
  right: 1px;
  width: 14px;
  height: 17px;
  border-left: 1px solid #bbb;
  background: conic-gradient(from -32deg at 50% 75%, #444 64deg, transparent 0) center / 8px 8px no-repeat;
  content: "";
  pointer-events: none;
}
```
